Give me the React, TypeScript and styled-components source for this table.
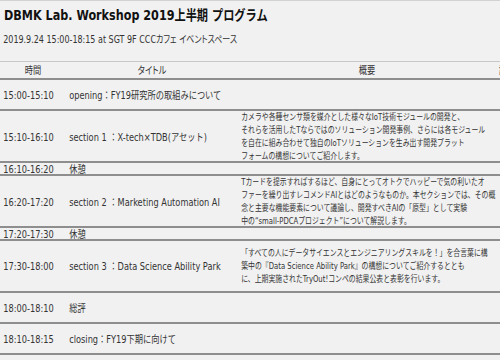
import React from 'react';
import styled, { createGlobalStyle } from 'styled-components';

type Kind = 'head' | 'single' | 'section' | 'break';

interface Session {
  time: string;
  title: string;
  kind: Kind;
  summary?: string[];
}

const GlobalStyle = createGlobalStyle`
  html, body {
    margin: 0;
    padding: 0;
    background: #f1f1f1;
    overflow: hidden;
  }

  body {
    font-family: "DejaVu Sans", "Noto Sans CJK JP", sans-serif;
    color: #333;
  }
`;

// the capture is squeezed sideways, so the sheet is laid out wider and narrowed
const Page = styled.div`
  width: 625px;
  border-top: 1px solid #d2d2d2;
  transform: scaleX(0.8);
  transform-origin: 0 0;
`;

const Title = styled.h1`
  margin: 4px 0 0 5px;
  font-size: 14px;
  line-height: 20px;
  font-weight: bold;
  color: #111;
  white-space: nowrap;
`;

const Meta = styled.p`
  margin: 8px 0 0 4px;
  font-size: 10px;
  line-height: 14px;
  white-space: nowrap;
  font-feature-settings: "palt";
`;

const Table = styled.div`
  margin-top: 14px;
  width: 720px;
`;

const rowHeights: Record<Kind, number> = {
  head: 19,
  single: 31,
  section: 52,
  break: 13,
};

const Row = styled.div<{ $kind: Kind }>`
  display: grid;
  grid-template-columns: 82.5px 215px 322.5px 28px 1fr;
  align-items: center;
  box-sizing: border-box;
  height: ${p => rowHeights[p.$kind]}px;
  border-top: ${p => (p.$kind === 'head' ? '1px solid #c8c8c8' : 'none')};
  border-bottom: 2px solid #8e8e8e;
  font-size: 10.3px;
  line-height: ${p => (p.$kind === 'break' ? '12px' : '14px')};
`;

const HeadCell = styled.div`
  text-align: center;
  white-space: nowrap;
  font-feature-settings: "palt";
`;

const Cell = styled.div`
  padding: 0 4px;
  white-space: nowrap;
`;

const Summary = styled.div`
  padding: 0 4px;
  font-size: 8.6px;
  line-height: 13px;
  white-space: nowrap;
`;

const sessions: Session[] = [
  { time: '15:00-15:10', title: 'opening：FY19研究所の取組みについて', kind: 'single' },
  {
    time: '15:10-16:10',
    title: 'section 1 ：X-tech×TDB(アセット)',
    kind: 'section',
    summary: [
      'カメラや各種センサ類を媒介とした様々なIoT技術モジュールの開発と、',
      'それらを活用したTならではのソリューション開発事例、さらには各モジュール',
      'を自在に組み合わせて独自のIoTソリューションを生み出す開発プラット',
      'フォームの構想についてご紹介します。',
    ],
  },
  { time: '16:10-16:20', title: '休憩', kind: 'break' },
  {
    time: '16:20-17:20',
    title: 'section 2 ：Marketing Automation AI',
    kind: 'section',
    summary: [
      'Tカードを提示すればするほど、自身にとってオトクでハッピーで気の利いたオ',
      'ファーを繰り出すレコメンドAIとはどのようなものか。本セクションでは、その概',
      '念と主要な機能要素について議論し、開発すべきAIの「原型」として実験',
      '中の“small-PDCAプロジェクト”について解説します。',
    ],
  },
  { time: '17:20-17:30', title: '休憩', kind: 'break' },
  {
    time: '17:30-18:00',
    title: 'section 3 ：Data Science Ability Park',
    kind: 'section',
    summary: [
      '「すべての人にデータサイエンスとエンジニアリングスキルを！」を合言葉に構',
      '築中の『Data Science Ability Park』の構想についてご紹介するととも',
      'に、上期実施されたTryOut!コンペの結果公表と表彰を行います。',
    ],
  },
  { time: '18:00-18:10', title: '総評', kind: 'single' },
  { time: '18:10-18:15', title: 'closing：FY19下期に向けて', kind: 'single' },
];

const App: React.FC = () => {
  return (
    <>
      <GlobalStyle />
      <Page>
        <Title>DBMK Lab. Workshop 2019上半期 プログラム</Title>
        <Meta>2019.9.24 15:00-18:15 at SGT 9F CCCカフェ イベントスペース</Meta>

        <Table>
          <Row $kind="head">
            <HeadCell>時間</HeadCell>
            <HeadCell>タイトル</HeadCell>
            <HeadCell>概要</HeadCell>
            <HeadCell>講師</HeadCell>
          </Row>

          {sessions.map(s => (
            <Row key={s.time} $kind={s.kind}>
              <Cell>{s.time}</Cell>
              <Cell>{s.title}</Cell>
              <Summary>
                {s.summary?.map(line => (
                  <div key={line}>{line}</div>
                ))}
              </Summary>
            </Row>
          ))}
        </Table>
      </Page>
    </>
  );
};

export default App;
